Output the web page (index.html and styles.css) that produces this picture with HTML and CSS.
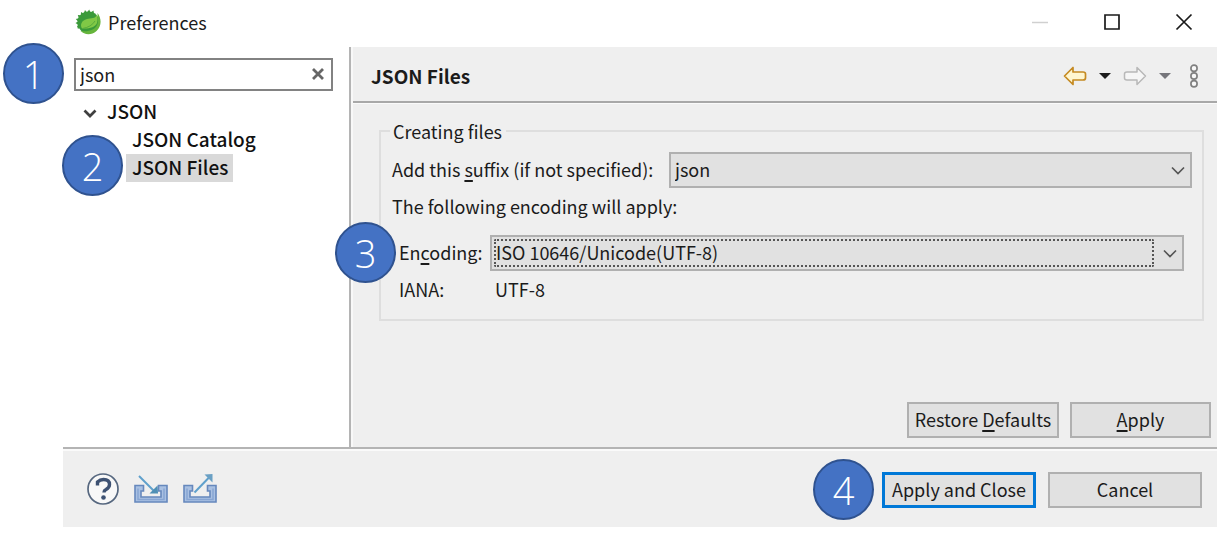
FILE: index.html
```
<!DOCTYPE html>
<html lang="en">
<head>
<meta charset="utf-8">
<meta name="viewport" content="width=device-width, initial-scale=1">
<title>Preferences</title>
<link rel="stylesheet" href="styles.css">
</head>
<body>
<div class="dialog">
  <header class="titlebar">
    <svg class="app-icon" width="26" height="26" viewBox="0 0 26 26" aria-hidden="true">
      <path d="M3 20l-1-3 1.500-1L.5 14l2.500-1.500L.8 10l3-.8L2.800 6l3 .3L6 3l2.700 1.500L10 1l2 2.500L14.200.5l1.300 3L18.500 1.500 19 5z" fill="#3f9b3d"/>
      <circle cx="13.500" cy="13.500" r="11" fill="#3a9a3a"/>
      <path d="M22.500 4c4.500 6 4 13-1 18-5 4.500-12 4-16 0 8 1 15-1 17-7 1.200-4 0-7 0-11z" fill="#66b53c"/>
      <path d="M22 5.500C20.500 10 16 9 12 10c-6 1.500-7 6.500-5 9.500 7 .5 13-1 15-5.500 1-3 .5-6 0-8.500z" fill="#80c846"/>
      <path d="M7.500 19.500c6-1 10-3.500 12.500-7.500" fill="none" stroke="#58ab3c" stroke-width="1"/>
    </svg>
    <h1 class="title">Preferences</h1>
    <div class="window-controls">
      <button class="icon-button" aria-label="Minimize" disabled><svg width="18" height="18" viewBox="0 0 18 18"><path d="M1 9.500h16" stroke="#d0d0d0" stroke-width="1.500"/></svg></button>
      <button class="icon-button" aria-label="Maximize"><svg width="18" height="18" viewBox="0 0 18 18"><path d="M2 2h14v14H2z" fill="none" stroke="#1a1a1a" stroke-width="1.700"/></svg></button>
      <button class="icon-button" aria-label="Close"><svg width="18" height="18" viewBox="0 0 18 18"><path d="M1.500 1.500l15 15m0-15l-15 15" stroke="#1a1a1a" stroke-width="1.700"/></svg></button>
    </div>
  </header>

  <div class="content">
    <nav class="sidebar" aria-label="Preference pages">
      <div class="filter">
        <input class="filter-input" type="text" value="json" aria-label="Filter">
        <button class="icon-button clear" aria-label="Clear"><svg width="14" height="14" viewBox="0 0 14 14"><path d="M2 2l10 10m0-10L2 12" stroke="#666" stroke-width="2.800"/></svg></button>
        <span class="callout callout-filter">1</span>
      </div>
      <ul class="tree">
        <li>
          <div class="tree-row">
            <svg width="16" height="12" viewBox="0 0 16 12" aria-hidden="true"><path d="M2.500 4.500L8 10l5.500-5.500" fill="none" stroke="#404040" stroke-width="2.700"/></svg>
            <a class="tree-link" href="#json">JSON</a>
          </div>
          <ul class="tree-children">
            <li class="tree-row"><a class="tree-link" href="#catalog">JSON Catalog</a></li>
            <li class="tree-row"><a class="tree-link selected" href="#files" aria-current="page">JSON Files</a><span class="callout callout-page">2</span></li>
          </ul>
        </li>
      </ul>
    </nav>

    <main class="page">
      <div class="page-header">
        <h2 class="page-title">JSON Files</h2>
        <div class="history">
          <button class="icon-button" aria-label="Back"><svg width="24" height="20" viewBox="0 0 24 20"><path d="M1.500 10L10 1.500v4.500h10q2.500 0 2.500 2v4q0 2-2.500 2H10v4.500z" fill="#fff6d0" stroke="#c58a22" stroke-width="1.700" stroke-linejoin="round"/></svg></button>
          <button class="icon-button" aria-label="Back history"><svg width="12" height="8" viewBox="0 0 12 8"><path d="M0 1h12L6 7z" fill="#1c1c1c"/></svg></button>
          <button class="icon-button" aria-label="Forward"><svg width="24" height="20" viewBox="0 0 24 20"><path d="M22.500 10L14 1.500v4.500H4q-2.500 0-2.500 2v4q0 2 2.500 2h10v4.500z" fill="#f6f6f6" stroke="#b8b8b8" stroke-width="1.500" stroke-linejoin="round"/></svg></button>
          <button class="icon-button" aria-label="Forward history"><svg width="12" height="8" viewBox="0 0 12 8"><path d="M0 1h12L6 7z" fill="#75757a"/></svg></button>
          <button class="icon-button menu" aria-label="View menu"><svg width="10" height="24" viewBox="0 0 10 24"><g fill="#f8f8f8" stroke="#808080" stroke-width="1.700"><circle cx="5" cy="4.200" r="3.100"/><circle cx="5" cy="12" r="3.100"/><circle cx="5" cy="19.800" r="3.100"/></g></svg></button>
        </div>
      </div>

      <form class="page-body">
        <fieldset class="group">
          <legend class="legend">Creating files</legend>
          <div class="row">
            <label class="suffix-label" for="suffix">Add this <u>s</u>uffix (if not specified):</label>
            <div class="combo">
              <select id="suffix" class="select"><option>json</option></select>
              <svg class="chevron" width="14" height="10" viewBox="0 0 14 10" aria-hidden="true"><path d="M1 1.500l6 6 6-6" fill="none" stroke="#555" stroke-width="1.700"/></svg>
            </div>
          </div>
          <p class="note">The following encoding will apply:</p>
          <div class="encoding">
            <span class="callout callout-encoding">3</span>
            <label for="encoding">En<u>c</u>oding:</label>
            <div class="combo focused">
              <select id="encoding" class="select"><option>ISO 10646/Unicode(UTF-8)</option></select>
              <svg class="chevron" width="14" height="10" viewBox="0 0 14 10" aria-hidden="true"><path d="M1 1.500l6 6 6-6" fill="none" stroke="#555" stroke-width="1.700"/></svg>
            </div>
            <span>IANA:</span>
            <output class="iana" for="encoding">UTF-8</output>
          </div>
        </fieldset>
        <div class="page-actions">
          <button class="button restore" type="button">Restore <u>D</u>efaults</button>
          <button class="button apply" type="button"><u>A</u>pply</button>
        </div>
      </form>
    </main>
  </div>

  <footer class="footer">
    <div class="tools">
      <button class="icon-button" aria-label="Help"><svg width="34" height="34" viewBox="0 0 34 34"><circle cx="17" cy="17" r="15" fill="#f8f8f8" stroke="#56677f" stroke-width="1.700"/><path d="M11.500 13.500V10q2.500-2.500 6-2.500 6 0 6 5 0 3-3.500 5-2 1-2 3" fill="none" stroke="#3e5273" stroke-width="3.400"/><circle cx="17.500" cy="25.500" r="2.300" fill="#3e5273"/></svg></button>
      <button class="icon-button" aria-label="Import"><svg width="36" height="32" viewBox="0 0 36 32"><path d="M2 12.500h8.500V18H8v6h20v-6h-2.500v-5.500H34V29H2z" fill="#a9c0e2" stroke="#6688bd" stroke-width="1.600"/><path d="M5 15.500v11h26v-11" fill="none" stroke="#87a5d3" stroke-width="1.500"/><path d="M6 3l15 15" stroke="#5fa0cc" stroke-width="2"/><path d="M25 20.500h-8.500l8-8z" fill="#4f8fb5"/></svg></button>
      <button class="icon-button" aria-label="Export"><svg width="36" height="32" viewBox="0 0 36 32"><path d="M2 12.500h8.500V18H8v6h20v-6h-2.500v-5.500H34V29H2z" fill="#a9c0e2" stroke="#6688bd" stroke-width="1.600"/><path d="M5 15.500v11h26v-11" fill="none" stroke="#87a5d3" stroke-width="1.500"/><path d="M12.500 19.500L27 4.500" stroke="#5fa0cc" stroke-width="2"/><path d="M30.500 1v8.500L22.500 1.500z" fill="#6aa0c4"/></svg></button>
    </div>
    <div class="dialog-actions">
      <button class="button primary" type="button">Apply and Close</button>
      <button class="button cancel" type="button">Cancel</button>
      <span class="callout callout-apply">4</span>
    </div>
  </footer>
</div>
</body>
</html>
```
FILE: styles.css
```
* { box-sizing: border-box; }

body {
  margin: 0;
  background: #fff;
  color: #1b1b1b;
  font: 18px/26px "Noto Sans CJK KR", "Noto Sans", sans-serif;
}

h1, h2, p, ul { margin: 0; padding: 0; }
ul { list-style: none; }
button, input, select { font: inherit; color: inherit; }
svg { display: block; }
u { text-underline-offset: 3px; text-decoration-thickness: 2px; }
label, span, output { white-space: nowrap; }

.dialog {
  display: flex;
  flex-direction: column;
  min-height: 100vh;
  padding: 0 0 9px 63px;
}

.icon-button {
  display: grid;
  place-items: center;
  padding: 0;
  border: 0;
  background: none;
}

/* Title bar */
.titlebar {
  display: flex;
  align-items: center;
  height: 47px;
  padding: 0 24px 4px 12px;
}
.title { margin-left: 7px; font-size: 18px; font-weight: 400; }
.window-controls { display: flex; gap: 54px; margin-left: auto; }

.content { display: flex; flex: 1; }

/* Sidebar */
.sidebar {
  flex: 0 0 288px;
  padding: 11px 16px 0 11px;
  border-right: 2px solid #b4b4b4;
}
.filter { position: relative; display: flex; }
.filter-input {
  width: 100%;
  height: 33px;
  padding: 0 30px 2px 4px;
  border: 2px solid #828282;
  background: #fff;
}
.clear { position: absolute; top: 9px; right: 8px; }
.tree { padding: 7px 0 0 8px; }
.tree-row { position: relative; display: flex; align-items: center; height: 28px; }
.tree-row svg { margin-right: 3px; }
.tree-children { padding-left: 44px; }
.tree-link {
  padding: 0 5px 2px 6px;
  color: #111;
  font-size: 19px;
  font-weight: 500;
  line-height: 26px;
  text-decoration: none;
}
.tree-link.selected { background: #d9d9d9; }

/* Preference page */
.page {
  display: flex;
  flex: 1;
  flex-direction: column;
  min-width: 0;
  border-left: 2px solid #f8f8f8;
  background: #efefef;
}
.page-header {
  display: flex;
  align-items: center;
  justify-content: space-between;
  height: 56px;
  padding: 3px 18px 0 18px;
  border-bottom: 2px solid #a8a8a8;
}
.page-title { font-size: 19px; font-weight: 700; }
.history { display: flex; align-items: center; gap: 12px; }
.menu { margin-left: 6px; }

.page-body {
  display: flex;
  flex: 1;
  flex-direction: column;
  padding: 14px 6px 9px 26px;
  border-top: 1px solid #fafafa;
}
.group {
  min-width: 0;
  margin: 0 7px 0 0;
  padding: 8px 10px 17px 11px;
  border: 2px solid #dedede;
}
.legend { margin-left: -2px; padding: 0 4px 0 3px; }
.row { display: flex; align-items: center; }
.suffix-label { flex: 0 0 277px; padding-bottom: 2px; }
.note { margin: 5px 0 16px; }
.encoding {
  position: relative;
  display: grid;
  grid-template-columns: 83px 1fr;
  align-items: center;
  gap: 5px 8px;
  padding: 0 8px 0 7px;
}
.encoding label { padding-bottom: 2px; }
.iana { padding-left: 5px; }

.combo { position: relative; flex: 1; min-width: 0; }
.select {
  display: block;
  width: 100%;
  height: 36px;
  padding: 0 32px 2px 4px;
  border: 2px solid #b0b0b0;
  border-radius: 0;
  background: #e1e1e1;
  appearance: none;
}
.chevron { position: absolute; top: 14px; right: 7px; pointer-events: none; }
.focused::after {
  content: "";
  position: absolute;
  inset: 4px 30px 4px 4px;
  border: 2px dotted #555;
  border-radius: 2px;
  pointer-events: none;
}

.page-actions { display: flex; gap: 11px; justify-content: flex-end; margin-top: auto; }
.button {
  height: 36px;
  padding: 0 0 2px;
  border: 2px solid #b0b0b0;
  background: #e1e1e1;
  white-space: nowrap;
}
.restore { width: 152px; }
.apply { width: 141px; }

/* Footer */
.footer {
  display: flex;
  align-items: center;
  justify-content: space-between;
  height: 80px;
  padding: 2px 15px 0 23px;
  border-top: 2px solid #b4b4b4;
  background: #efefef;
  box-shadow: inset 0 2px #fafafa;
}
.tools { display: flex; align-items: center; gap: 13px; }
.dialog-actions { position: relative; display: flex; gap: 12px; margin-top: 2px; }
.primary, .cancel { width: 154px; }
.primary { border: 3px solid #0078d7; }

/* Numbered step markers */
.callout {
  position: absolute;
  z-index: 1;
  display: grid;
  place-items: center;
  width: 61px;
  height: 61px;
  border: 2px solid #2f528f;
  border-radius: 50%;
  background: #4472c4;
  color: #fff;
  font-family: "Open Sans", "Noto Sans", sans-serif;
  font-size: 38px;
  font-weight: 300;
  line-height: 56px;
}
.callout-filter { top: -15px; left: -71px; }
.callout-page { top: -19px; left: -64px; }
.callout-encoding { top: -13px; left: -57px; }
.callout-apply { top: -13px; left: -69px; }
```
